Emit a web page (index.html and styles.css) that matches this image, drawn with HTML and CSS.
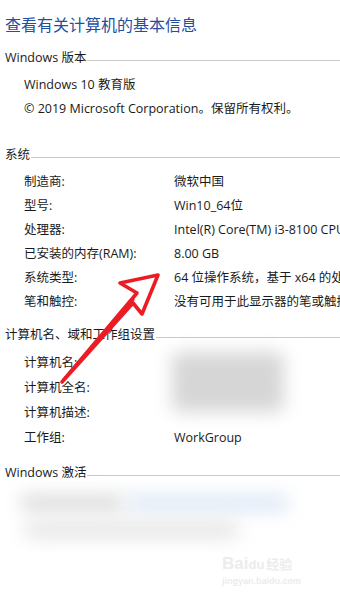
FILE: index.html
```html
<!DOCTYPE html>
<html lang="zh-CN">
<head>
<meta charset="utf-8">
<title>系统</title>
<link rel="stylesheet" href="styles.css">
</head>
<body>
<div class="page">
  <h1 class="title">查看有关计算机的基本信息</h1>

  <div class="sec-head"><span>Windows 版本</span><i class="rule"></i></div>
  <div class="rows">
    <div class="line">Windows 10 教育版</div>
    <div class="line">© 2019 Microsoft Corporation。保留所有权利。</div>
  </div>

  <div class="sec-head s2"><span>系统</span><i class="rule"></i></div>
  <div class="rows">
    <div class="kv"><span class="k">制造商:</span><span class="v">微软中国</span></div>
    <div class="kv"><span class="k">型号:</span><span class="v">Win10_64位</span></div>
    <div class="kv"><span class="k">处理器:</span><span class="v">Intel(R) Core(TM) i3-8100 CPU @ 3.60GHz</span></div>
    <div class="kv"><span class="k">已安装的内存(RAM):</span><span class="v">8.00 GB</span></div>
    <div class="kv"><span class="k">系统类型:</span><span class="v">64 位操作系统，基于 x64 的处理器</span></div>
    <div class="kv"><span class="k">笔和触控:</span><span class="v">没有可用于此显示器的笔或触控输入</span></div>
  </div>

  <div class="sec-head s3"><span>计算机名、域和工作组设置</span><i class="rule"></i></div>
  <div class="rows tall">
    <div class="kv"><span class="k">计算机名:</span><span class="v"></span></div>
    <div class="kv"><span class="k">计算机全名:</span><span class="v"></span></div>
    <div class="kv"><span class="k">计算机描述:</span><span class="v"></span></div>
    <div class="kv"><span class="k">工作组:</span><span class="v">WorkGroup</span></div>
  </div>

  <div class="sec-head s4"><span>Windows 激活</span><i class="rule"></i></div>

  <div class="blur name-blur"></div>
  <div class="blur act-grey1"></div>
  <div class="blur act-blue"></div>
  <div class="blur act-grey2"></div>

  <div class="watermark">
    <div class="wm-top"><span class="wm-bai">Bai</span><span class="wm-du">du</span><span class="wm-jy">经验</span></div>
    <div class="wm-url">jingyan.baidu.com</div>
  </div>

  <svg class="arrow" width="340" height="600" viewBox="0 0 340 600">
    <path d="M62 382 L137 293 L120 283 L158 275 L142 314 L133 303 Z" fill="none" stroke="#ec1c24" stroke-width="3.6" stroke-linejoin="round"/>
    <path d="M63 380 L134 299" stroke="#ec1c24" stroke-width="2.4" fill="none"/>
  </svg>
</div>
</body>
</html>
```

FILE: styles.css
```css
html, body {
  margin: 0;
  padding: 0;
  background: #ffffff;
}
.page {
  position: relative;
  width: 340px;
  height: 600px;
  overflow: hidden;
  font-family: "Open Sans", "Noto Sans CJK SC", sans-serif;
  font-size: 12.5px;
  color: #1a1a1a;
}
.title {
  margin: 0;
  padding-left: 5px;
  height: 50px;
  line-height: 50px;
  font-size: 16px;
  font-weight: normal;
  color: #1f4f9f;
  white-space: nowrap;
}
.sec-head {
  display: flex;
  align-items: center;
  height: 16px;
  line-height: 16px;
  padding-left: 5px;
  white-space: nowrap;
}
.sec-head .rule {
  flex: 1;
  height: 1px;
  background: #c9c9c9;
  margin-top: 4px;
  margin-left: 1px;
}
.s2 { margin-top: 26px; }
.s3 { margin-top: 13px; }
.s4 { margin-top: 15px; }
.rows {
  margin-top: 7px;
  padding-left: 24px;
  display: flex;
  flex-direction: column;
}
.rows.tall { margin-top: 7px; }
.line, .kv {
  height: 24px;
  line-height: 24px;
  white-space: nowrap;
}
.tall .kv {
  height: 25px;
  line-height: 25px;
}
.kv {
  display: flex;
}
.k {
  width: 150px;
  flex: none;
}
.v {
  flex: none;
}
.blur {
  position: absolute;
  filter: blur(9px);
  border-radius: 8px;
}
.name-blur {
  left: 172px;
  top: 352px;
  width: 112px;
  height: 60px;
  background: #d6d6d6;
}
.act-grey1 {
  left: 20px;
  top: 494px;
  width: 105px;
  height: 18px;
  background: #dedede;
}
.act-blue {
  left: 125px;
  top: 494px;
  width: 165px;
  height: 18px;
  background: #dfeaf7;
}
.act-grey2 {
  left: 24px;
  top: 522px;
  width: 215px;
  height: 16px;
  background: #e4e4e4;
}
.watermark {
  position: absolute;
  left: 222px;
  top: 555px;
  width: 95px;
  color: #ececec;
  font-family: "Liberation Sans", sans-serif;
  text-align: left;
}
.wm-top {
  font-size: 17px;
  font-weight: bold;
  line-height: 18px;
  white-space: nowrap;
}
.wm-du { font-size: 13px; }
.wm-jy {
  font-family: "Noto Sans CJK SC", sans-serif;
  font-size: 13px;
  margin-left: 2px;
}
.wm-url {
  font-size: 9px;
  line-height: 14px;
  font-weight: bold;
}
.arrow {
  position: absolute;
  left: 0;
  top: 0;
  pointer-events: none;
}
```
